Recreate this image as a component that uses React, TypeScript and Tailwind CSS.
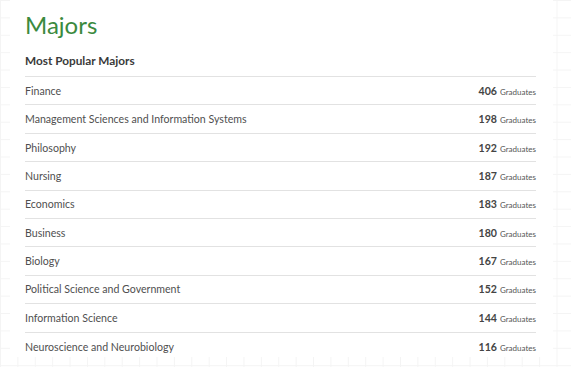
import React from 'react';

const majors: { name: string; count: number }[] = [
  { name: 'Finance', count: 406 },
  { name: 'Management Sciences and Information Systems', count: 198 },
  { name: 'Philosophy', count: 192 },
  { name: 'Nursing', count: 187 },
  { name: 'Economics', count: 183 },
  { name: 'Business', count: 180 },
  { name: 'Biology', count: 167 },
  { name: 'Political Science and Government', count: 152 },
  { name: 'Information Science', count: 144 },
  { name: 'Neuroscience and Neurobiology', count: 116 },
];

export default function App() {
  return (
    <div className="h-[367px] w-[571px] overflow-hidden bg-white bg-[linear-gradient(#f4f4f4_1px,transparent_1px),linear-gradient(90deg,#f4f4f4_1px,transparent_1px)] bg-[size:17.4px_17.4px] font-['Lato','Liberation_Sans',sans-serif]">
      <div className="ml-[10px] h-[357px] w-[543px] bg-white pl-[15px] pr-[17px] pt-[10px]">
        <h2 className="text-[24px] leading-[30px] text-[#3b8a3e]">Majors</h2>
        <h3 className="mt-[13px] pb-[7px] text-[11.8px] font-bold leading-[16px] text-[#3a3a3a]">Most Popular Majors</h3>
        <ul className="border-t border-[#e2e2e2]">
          {majors.map((m, i) => (
            <li
              key={m.name}
              className={`flex h-[28.4px] items-center justify-between pt-[2px] text-[10.6px] text-[#4f4f4f] ${
                i < majors.length - 1 ? 'border-b border-[#e2e2e2]' : ''
              }`}
            >
              <span>{m.name}</span>
              <span className="flex items-baseline gap-[3px]">
                <span className="text-[10.6px] font-bold text-[#444]">{m.count}</span>
                <span className="text-[8px] text-[#555]">Graduates</span>
              </span>
            </li>
          ))}
        </ul>
      </div>
    </div>
  );
}
